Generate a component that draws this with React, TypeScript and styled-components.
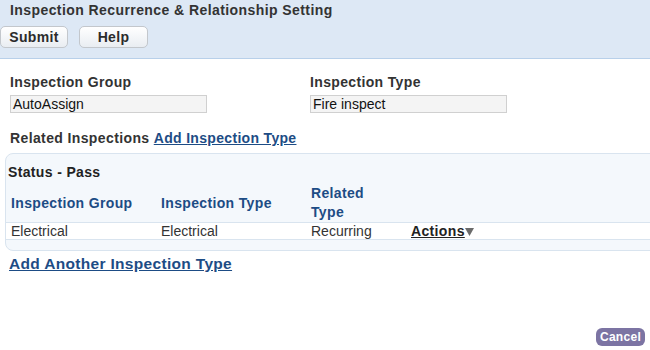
import styled, { createGlobalStyle } from "styled-components";

const GlobalStyle = createGlobalStyle`
  body {
    margin: 0;
    font-family: "Liberation Sans", Arial, sans-serif;
    color: #333;
    background: #fff;
  }
`;

const Page = styled.div`
  width: 650px;
  height: 350px;
  display: flex;
  flex-direction: column;
  overflow: hidden;
`;

const Header = styled.div`
  background: #dde8f5;
  border-bottom: 1px solid #b8d0ea;
  padding: 2px 0 10px;
`;

const Title = styled.h1`
  margin: 0 0 8px 10px;
  font-size: 14px;
  line-height: 16px;
  font-weight: bold;
  letter-spacing: 0.42px;
  color: #333;
`;

const ButtonRow = styled.div`
  display: flex;
  gap: 11px;
`;

const Button = styled.button<{ $width: number }>`
  width: ${(p) => p.$width}px;
  height: 22px;
  padding: 0;
  border: 1px solid #c3c7cc;
  border-radius: 5px;
  background: linear-gradient(#ffffff, #e9edf2);
  font-family: inherit;
  font-size: 14px;
  font-weight: bold;
  letter-spacing: 0.35px;
  color: #2b2b2b;
`;

const Fields = styled.div`
  display: grid;
  grid-template-columns: 300px 300px;
  padding: 15px 10px 0;
`;

const Field = styled.div`
  display: flex;
  flex-direction: column;
  gap: 5px;
`;

const Label = styled.div`
  font-size: 14px;
  line-height: 16px;
  font-weight: bold;
  letter-spacing: 0.35px;
  color: #333;
`;

const ReadOnly = styled.div`
  width: 193px;
  height: 16px;
  padding-left: 2px;
  border: 1px solid #d0d0d0;
  background: #f4f4f4;
  font-size: 14px;
  line-height: 16px;
  color: #111;
`;

const Related = styled.div`
  margin: 17px 10px 7px;
  font-size: 14px;
  line-height: 16px;
  font-weight: bold;
  letter-spacing: 0.38px;
`;

const Link = styled.a<{ $big?: boolean }>`
  color: #1d4c85;
  text-decoration: underline;
  font-weight: bold;
  letter-spacing: 0.32px;
  font-size: ${(p) => (p.$big ? "15.5px" : "14px")};
`;

const Panel = styled.div`
  margin-left: 5px;
  width: 660px;
  border: 1px solid #d9e4ef;
  border-radius: 8px 0 0 8px;
  background: #f4f8fc;
  padding: 10px 0;
`;

const Status = styled.div`
  padding-left: 2px;
  font-size: 14px;
  line-height: 16px;
  font-weight: bold;
  letter-spacing: 0.35px;
  color: #222;
`;

const Grid = styled.div`
  display: grid;
  grid-template-columns: 150px 150px 100px 1fr;
  margin-top: 3px;
`;

const Th = styled.div`
  display: flex;
  align-items: center;
  padding: 1px 0 0 5px;
  font-size: 14px;
  line-height: 19px;
  font-weight: bold;
  letter-spacing: 0.35px;
  color: #1d4c85;
  border-bottom: 1px solid #d9e4ef;
`;

const Td = styled.div`
  display: flex;
  align-items: center;
  padding-left: 5px;
  height: 16px;
  font-size: 14px;
  line-height: 16px;
  background: #fff;
  color: #333;
  border-bottom: 1px solid #d9e4ef;
`;

const Actions = styled.span`
  font-weight: bold;
  letter-spacing: 0.35px;
  text-decoration: underline;
  color: #222;
`;

const Caret = styled.svg`
  width: 9px;
  height: 8px;
  margin-top: 1px;
`;

const AddAnother = styled.div`
  margin: 4px 0 0 9px;
  line-height: 18px;
`;

const Footer = styled.div`
  margin-top: auto;
  display: flex;
  justify-content: flex-end;
  padding: 0 5px 4px 0;
`;

const Cancel = styled.button`
  width: 49px;
  height: 18px;
  padding: 0;
  border: none;
  border-radius: 6px;
  background: #7c74a3;
  color: #fff;
  font-family: inherit;
  font-size: 12px;
  font-weight: bold;
  letter-spacing: 0.3px;
`;

export default function App() {
  return (
    <Page>
      <GlobalStyle />
      <Header>
        <Title>Inspection Recurrence &amp; Relationship Setting</Title>
        <ButtonRow>
          <Button $width={68}>Submit</Button>
          <Button $width={69}>Help</Button>
        </ButtonRow>
      </Header>
      <Fields>
        <Field>
          <Label>Inspection Group</Label>
          <ReadOnly>AutoAssign</ReadOnly>
        </Field>
        <Field>
          <Label>Inspection Type</Label>
          <ReadOnly>Fire inspect</ReadOnly>
        </Field>
      </Fields>
      <Related>
        Related Inspections <Link href="#">Add Inspection Type</Link>
      </Related>
      <Panel>
        <Status>Status - Pass</Status>
        <Grid>
          <Th>Inspection Group</Th>
          <Th>Inspection Type</Th>
          <Th>
            Related
            <br />
            Type
          </Th>
          <Th />
          <Td>Electrical</Td>
          <Td>Electrical</Td>
          <Td>Recurring</Td>
          <Td>
            <Actions>Actions</Actions>
            <Caret viewBox="0 0 9 8">
              <path d="M0 0H9L4.5 8Z" fill="#6b6b6b" />
            </Caret>
          </Td>
        </Grid>
      </Panel>
      <AddAnother>
        <Link href="#" $big>
          Add Another Inspection Type
        </Link>
      </AddAnother>
      <Footer>
        <Cancel>Cancel</Cancel>
      </Footer>
    </Page>
  );
}
